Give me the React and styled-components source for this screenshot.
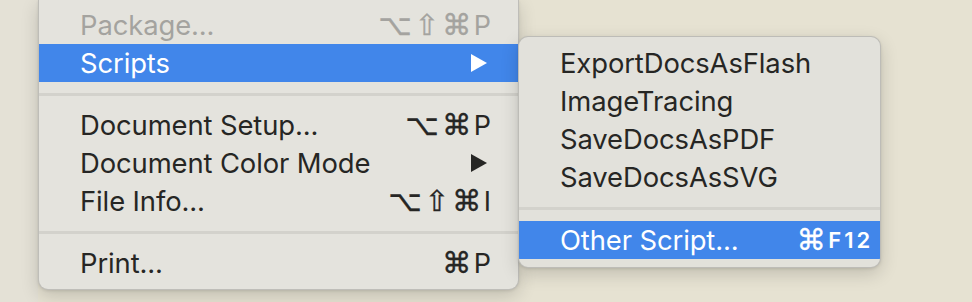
import styled, { createGlobalStyle } from "styled-components";

const GlobalStyle = createGlobalStyle`
  html, body {
    margin: 0;
    padding: 0;
    background: #e6e2d3;
  }
  body {
    font-family: Inter, "Noto Sans", "DejaVu Sans", sans-serif;
    -webkit-font-smoothing: antialiased;
  }
`;

const Desktop = styled.div`
  width: 972px;
  height: 302px;
  overflow: hidden;
  display: flex;
  align-items: flex-start;
  padding-left: 38px;
  box-sizing: border-box;
  background: linear-gradient(90deg, #e4e1d6 0px, #e4e1d6 38px, #e6e2d2 38px);
`;

const Menu = styled.div`
  width: ${(p) => p.$width}px;
  margin-top: ${(p) => p.$top || 0}px;
  padding: ${(p) => p.$padTop}px 0 ${(p) => p.$padBottom}px;
  background: #e4e3dd;
  border: 1px solid rgba(0, 0, 0, 0.16);
  border-top: ${(p) => (p.$cut ? "none" : "1px solid rgba(0, 0, 0, 0.16)")};
  border-radius: ${(p) => (p.$cut ? "0 0 10px 10px" : "10px")};
  box-shadow: 0 6px 18px rgba(0, 0, 0, 0.16), 0 1px 3px rgba(0, 0, 0, 0.1);
  box-sizing: border-box;
  overflow: hidden;
  flex-shrink: 0;
`;

const SubMenu = styled(Menu)`
  margin-left: -1px;
  background: #e2e1db;
  position: relative;
`;

const Item = styled.div`
  height: 38px;
  display: flex;
  align-items: center;
  padding: 0 ${(p) => p.$padRight || 27}px 0 41px;
  font-size: 27.4px;
  letter-spacing: -0.1px;
  color: ${(p) => (p.$disabled ? "#a4a39f" : p.$active ? "#ffffff" : "#262624")};
  background: ${(p) => (p.$active ? "#4186ea" : "transparent")};
`;

const Label = styled.span`
  flex: 1;
  white-space: nowrap;
`;

const Keys = styled.span`
  display: flex;
  align-items: center;
  gap: 3px;
`;

const Key = styled.span`
  font-family: ${(p) => (p.$letter ? 'Inter, "DejaVu Sans", sans-serif' : '"DejaVu Sans", sans-serif')};
  font-size: ${(p) => (p.$small ? 22 : p.$letter ? 27 : 29)}px;
  font-weight: ${(p) => (p.$small ? 600 : 400)};
  -webkit-text-stroke: ${(p) => (p.$letter ? 0 : 0.35)}px currentColor;
`;

const Separator = styled.div`
  height: ${(p) => p.$h || 24}px;
  display: flex;
  align-items: center;
  &::before {
    content: "";
    flex: 1;
    height: 3px;
    background: #d3d2cc;
  }
`;

const ArrowIcon = styled.svg`
  margin-right: 3px;
`;

const Arrow = () => (
  <ArrowIcon width="18" height="20" viewBox="0 0 18 20">
    <path d="M1 1 L17 10 L1 19 Z" fill="currentColor" />
  </ArrowIcon>
);

function Shortcut({ keys, small }) {
  return (
    <Keys>
      {keys.map((k, i) => (
        <Key key={i} $letter={/[A-Z0-9]/.test(k)} $small={small && /[A-Z0-9]/.test(k)}>
          {k}
        </Key>
      ))}
    </Keys>
  );
}

export default function App() {
  return (
    <>
      <GlobalStyle />
      <Desktop>
        <Menu $width={481} $padTop={6} $padBottom={7} $cut>
          <Item $disabled>
            <Label>Package...</Label>
            <Shortcut keys={["⌥", "⇧", "⌘", "P"]} />
          </Item>
          <Item $active>
            <Label>Scripts</Label>
            <Arrow />
          </Item>
          <Separator />
          <Item>
            <Label>Document Setup...</Label>
            <Shortcut keys={["⌥", "⌘", "P"]} />
          </Item>
          <Item>
            <Label>Document Color Mode</Label>
            <Arrow />
          </Item>
          <Item>
            <Label>File Info...</Label>
            <Shortcut keys={["⌥", "⇧", "⌘", "I"]} />
          </Item>
          <Separator />
          <Item>
            <Label>Print...</Label>
            <Shortcut keys={["⌘", "P"]} />
          </Item>
        </Menu>
        <SubMenu $width={363} $top={36} $padTop={7} $padBottom={8}>
          <Item>
            <Label>ExportDocsAsFlash</Label>
          </Item>
          <Item>
            <Label>ImageTracing</Label>
          </Item>
          <Item>
            <Label>SaveDocsAsPDF</Label>
          </Item>
          <Item>
            <Label>SaveDocsAsSVG</Label>
          </Item>
          <Separator $h={25} />
          <Item $active $padRight={10}>
            <Label>Other Script...</Label>
            <Shortcut keys={["⌘", "F", "1", "2"]} small />
          </Item>
        </SubMenu>
      </Desktop>
    </>
  );
}
